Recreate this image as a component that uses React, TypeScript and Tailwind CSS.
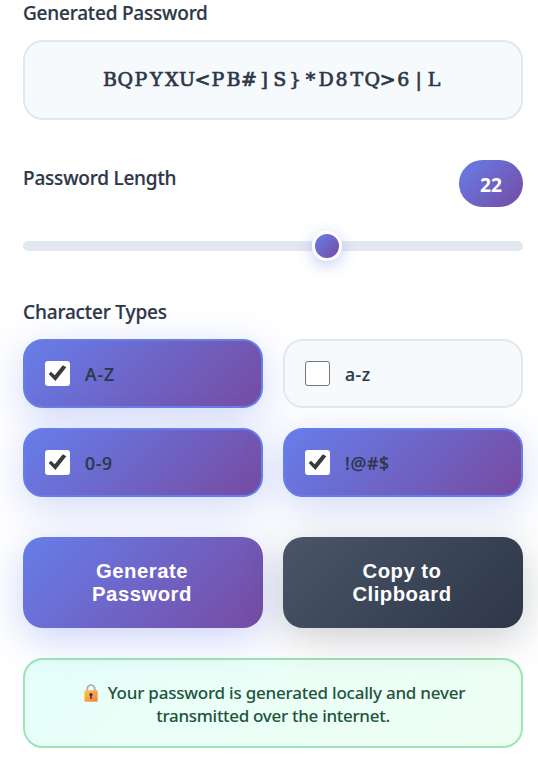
import { useState } from "react";

const PASSWORD = "BQPYXU<PB#]S}*D8TQ>6|L";

const CHAR_TYPES = [
  { id: "upper", label: "A-Z", checked: true, spacing: "tracking-[0.9px]" },
  { id: "lower", label: "a-z", checked: false, spacing: "tracking-[0.5px]" },
  { id: "number", label: "0-9", checked: true, spacing: "tracking-[0.6px]" },
  { id: "symbol", label: "!@#$", checked: true, spacing: "tracking-[0.7px]" },
];

const LockIcon = () => (
  <svg className="inline-block align-[-3px]" width="14" height="18" viewBox="0 0 14 18">
    <defs>
      <linearGradient id="lock" x1="0" y1="0" x2="1" y2="1">
        <stop offset="0" stopColor="#ffc94d" />
        <stop offset="1" stopColor="#f9793f" />
      </linearGradient>
    </defs>
    <path d="M3.3 7V4.8a3.7 3.7 0 0 1 7.4 0V7" fill="none" stroke="#b4adb9" strokeWidth="1.9" />
    <rect x="0.4" y="6.3" width="13.2" height="11.4" rx="1" fill="url(#lock)" />
    <path d="M7 9a1.7 1.7 0 0 1 .8 3.2V15H6.2v-2.8A1.7 1.7 0 0 1 7 9z" fill="#3f3653" />
  </svg>
);

const CheckBox = ({ checked }: { checked: boolean }) => (
  <span
    className={`flex h-[25px] w-[25px] shrink-0 items-center justify-center rounded-[3px] bg-white ${
      checked ? "" : "border border-[#767676]"
    }`}
  >
    {checked && (
      <svg width="25" height="25" viewBox="0 0 25 25">
        <path d="M3.7 12.9 6 10.7 9.7 14.2 17.8 4.2 21.3 6.3 10.4 20.1z" fill="#3b3b3b" />
      </svg>
    )}
  </span>
);

const App = () => {
  const [types, setTypes] = useState(CHAR_TYPES);
  const [length] = useState(22);

  const toggle = (id: string) =>
    setTypes(types.map((t) => (t.id === id ? { ...t, checked: !t.checked } : t)));

  return (
    <div className="h-[761px] overflow-hidden bg-white pl-[23px] pr-[15px] font-['Noto_Sans',sans-serif] font-medium text-[#2d3748]">

      {/* Password */}
      <h2 className="h-[40px] text-[19px] leading-[26px] tracking-[-0.2px] [-webkit-text-stroke:0.2px_#2d3748]">Generated Password</h2>
      <div className="flex h-[80px] items-center justify-center rounded-[20px] border-2 border-[#e2e8f0] bg-[#f7fafc] pb-px font-['DejaVu_Serif',serif] text-[19px] font-normal [-webkit-text-stroke:0.7px_#2d3748]">
        {PASSWORD.split("").map((char, i) => (
          <span key={i} className="flex w-[15.44px] justify-center pr-[2px]">{char}</span>
        ))}
      </div>

      {/* Length */}
      <div className="mt-10 flex h-[47px] items-start justify-between">
        <h2 className="mt-[5px] text-[19px] leading-[26px] tracking-[-0.2px] [-webkit-text-stroke:0.2px_#2d3748]">Password Length</h2>
        <span className="flex h-[47px] w-16 items-center justify-center rounded-[25px] bg-[linear-gradient(135deg,#667eea_0%,#764ba2_100%)] pt-[3px] text-[19.2px] font-bold text-white">
          {length}
        </span>
      </div>
      <div className="mt-[34px] flex h-[10px] items-center rounded-[5px] bg-[#e2e8f0] pl-[289px]">
        <div className="h-[30px] w-[30px] shrink-0 rounded-full border-[3px] border-white bg-[linear-gradient(135deg,#667eea,#764ba2)] shadow-[0_4px_15px_rgba(102,126,234,0.4)]" />
      </div>

      {/* Character types */}
      <h2 className="mt-[48px] h-[40px] text-[19px] leading-[26px] tracking-[-0.15px] [-webkit-text-stroke:0.2px_#2d3748]">Character Types</h2>
      <div className="grid grid-cols-2 gap-5">
        {types.map((type) => (
          <button
            key={type.id}
            onClick={() => toggle(type.id)}
            className={`flex h-[69px] items-center gap-[15px] rounded-[20px] border-2 px-5 text-left text-[17.6px] ${
              type.checked
                ? "border-[#667eea] bg-[linear-gradient(135deg,#667eea,#764ba2)] shadow-[0_10px_40px_rgba(102,126,234,0.3)]"
                : "border-[#e2e8f0] bg-[#f7fafc]"
            }`}
          >
            <CheckBox checked={type.checked} />
            <span className={`pt-[2px] [-webkit-text-stroke:0.2px_#2d3748] ${type.spacing}`}>{type.label}</span>
          </button>
        ))}
      </div>

      {/* Actions */}
      <div className="relative mt-10 grid grid-cols-2 gap-5 font-['Liberation_Sans',sans-serif] text-[20.3px] leading-[23px] font-bold tracking-[0.5px] text-white">
        <button className="h-[91px] rounded-[20px] bg-[linear-gradient(135deg,#667eea,#764ba2)] pr-[2px] shadow-[0_10px_40px_rgba(102,126,234,0.35)]">
          Generate
          <br />
          Password
        </button>
        <button className="h-[91px] rounded-[20px] bg-[linear-gradient(135deg,#4a5568,#2d3748)] pr-[2px] shadow-[0_10px_40px_rgba(45,55,72,0.25)]">
          Copy to
          <br />
          Clipboard
        </button>
      </div>

      {/* Notice */}
      <div className="mt-[30px] flex h-[90px] flex-col items-center justify-center rounded-[20px] border-2 border-[#9ae6b4] bg-[linear-gradient(135deg,#e6fffa,#f0fff4)] pt-[2px] text-[17px] leading-[23px] tracking-[-0.22px] text-[#22543d]">
        <p className="pl-[3px] whitespace-nowrap">
          <LockIcon />
          <span className="ml-[10px]">Your password is generated locally and never</span>
        </p>
        <p className="tracking-[-0.3px]">transmitted over the internet.</p>
      </div>

    </div>
  );
};

export default App;
